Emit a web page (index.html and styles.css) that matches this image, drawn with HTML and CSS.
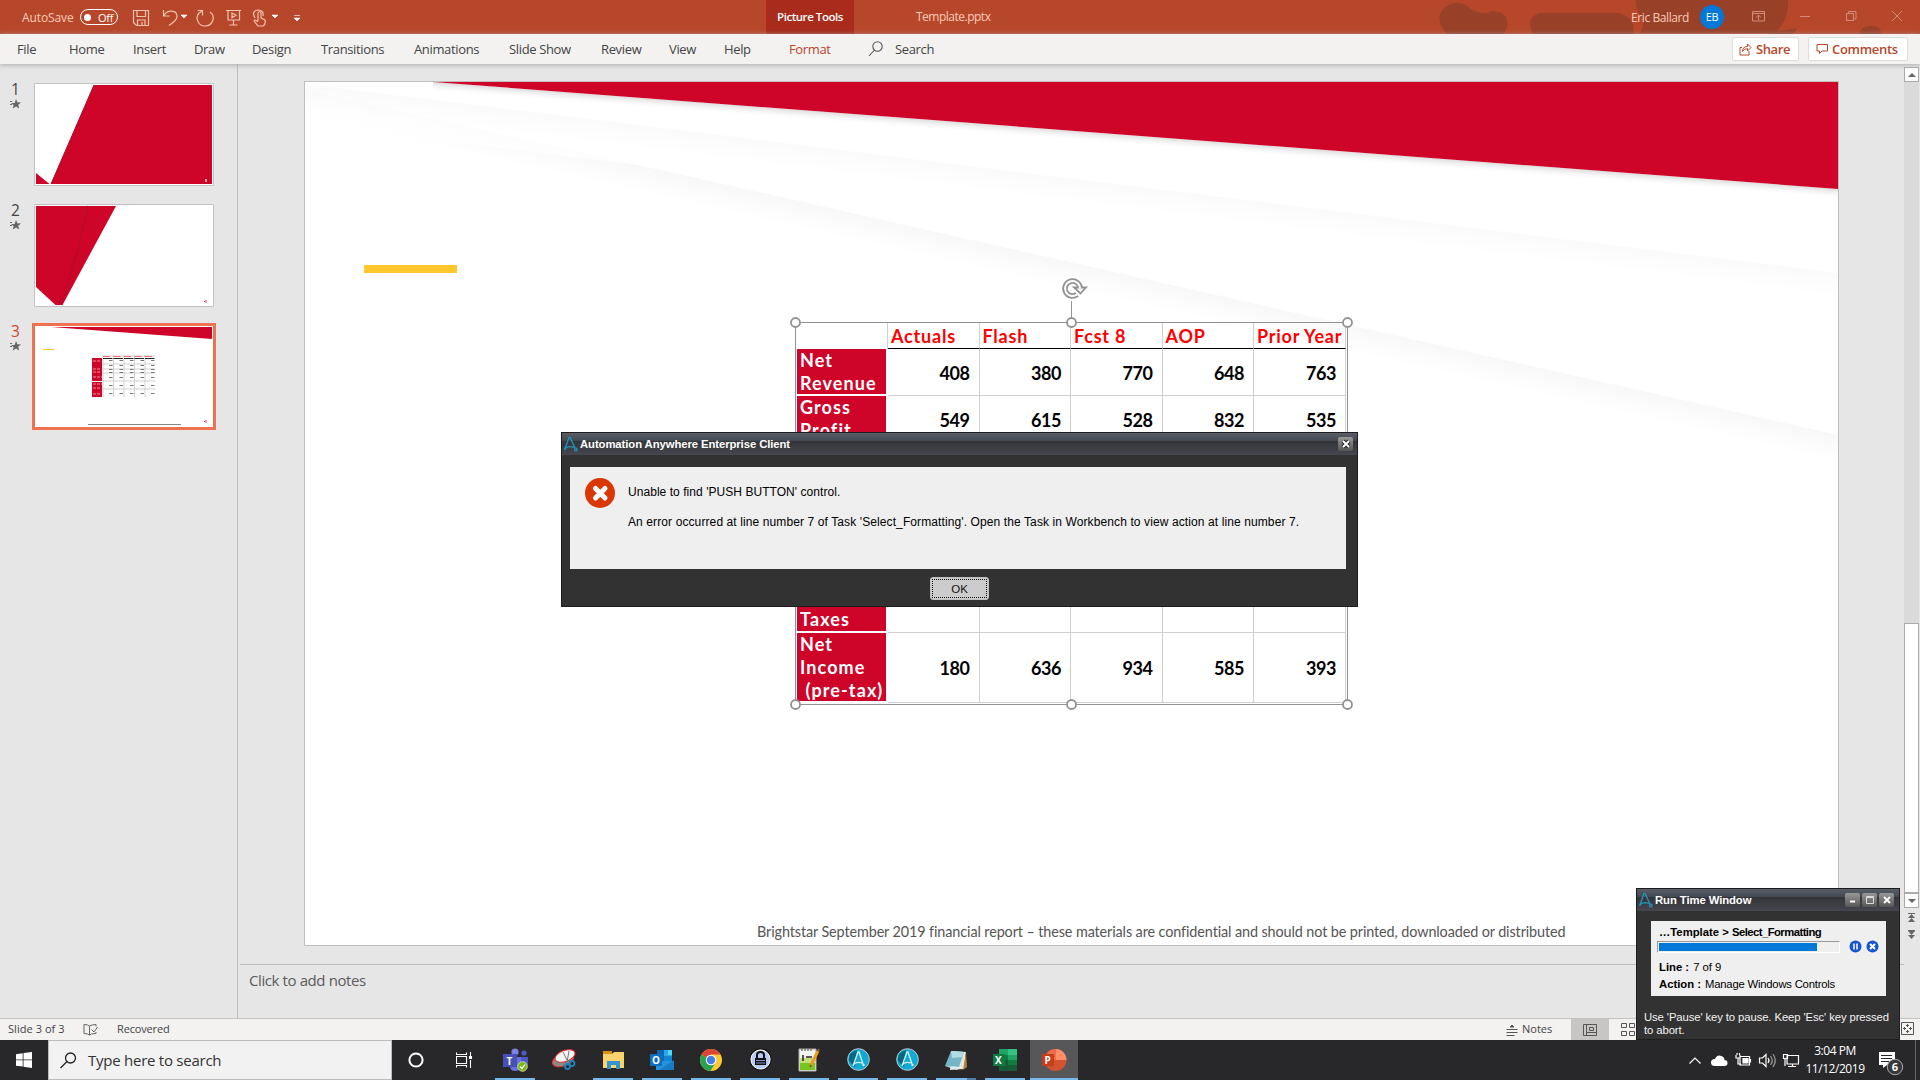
FILE: index.html
```html
<!DOCTYPE html>
<html lang="en">
<head>
<meta charset="utf-8">
<title>Template.pptx</title>
<link rel="stylesheet" href="styles.css">
</head>
<body>
<div class="screen">
  <header class="titlebar">
    <svg class="title-art" width="520" height="34" viewBox="0 0 520 34"><g fill="#994028"><path d="M47 34Q34 20 43 9Q57-4 72 10Q82 16 92 11Q110 12 107 27L104 34z"/><path d="M133 34Q125 19 139 13H219Q237 19 233 34z"/><path d="M236 0H388Q389 22 374 33H240Q247 22 239 13Q235 7 236 0z"/><path d="M370 31Q385 31 397 28Q395 34 390 34H368z"/><path d="M459 34Q461 26 471 26T481 34z"/></g></svg>
    <div class="quick">
      <span class="autosave">AutoSave</span>
      <span class="toggle"><i></i>Off</span>
      <svg class="qicons" width="190" height="34" viewBox="120 0 190 34" fill="none" stroke="#f6c3b0" stroke-width="1.2"><path d="M133.500 10.500h15v15h-12l-3-3zM137 10.500v6h8.500v-6M137.500 25v-5h7.500v5M142 22v3"/><path d="M163.500 10v6h6M164 15.500c3-6 13-6 13 1 0 4-4 6-8 9"/><path d="M197.500 10.500h5v5M202 11c-9 5-4 15 3 15 8 0 11-10 5-14"/><path d="M226 10.500h15M228 10.500v9.500h11.500v-9.500M233.500 20v5M229.500 25h8M232 13l4 2.300-4 2.300z"/><path d="M258 21v-8q2-3 3 0v5l4 2q1 4-2 6h-5l-4-5q1-2 4 1M255 18q-4-7 3-8 6 0 5 6"/><path d="M181 15h6l-3 3zM272 15h6l-3 3zM294 18h6l-3 3zM294 15.500h6" fill="#fff" stroke="#fff" stroke-width=".6"/></svg>
    </div>
    <span class="picture-tools">Picture Tools</span>
    <span class="filename">Template.pptx</span>
    <div class="account"><span class="user">Eric Ballard</span><span class="avatar">EB</span>
      <svg class="wctl" width="160" height="34" viewBox="1745 0 160 34" fill="none" stroke="#d28b76"><path d="M1752.500 11.500h12v9.500h-12zM1752.500 13.500h12M1758.500 20v-4.500M1756 17.500l2.500-2.500 2.500 2.500M1800 16.500h10M1846.500 13.500h7v7h-7zM1848.500 13v-1.500h7.500v7.500h-2M1892 11l10 10M1902 11l-10 10"/></svg>
    </div>
  </header>
  <nav class="ribbon">
    <div class="tabs"><span>File</span><span>Home</span><span>Insert</span><span>Draw</span><span>Design</span><span>Transitions</span><span>Animations</span><span>Slide Show</span><span>Review</span><span>View</span><span>Help</span><span class="active">Format</span><svg width="16" height="18" viewBox="0 0 16 18" fill="none" stroke="#555" stroke-width="1.100"><circle cx="9.500" cy="6.500" r="4.700"/><path d="M6.500 10L1 16"/></svg><span class="search">Search</span></div>
    <div class="actions">
      <span class="btn share"><svg width="13" height="13" viewBox="0 0 13 13" fill="none" stroke="#b7472a"><path d="M3 4.500H1v7.500h9V8M3.500 8.500q0-5 5-5V1l3.500 3.500L8.500 8V5.700Q5 5.500 3.500 8.500z"/></svg>Share</span>
      <span class="btn comments"><svg width="12" height="12" viewBox="0 0 12 12" fill="none" stroke="#b7472a"><path d="M1 1.500h10.500v6.500H6L3.500 10.500V8H1z"/></svg>Comments</span>
    </div>
  </nav>
  <main class="work">
    <aside class="thumbs">
      <div class="thumb"><div class="num">1<svg width="11" height="10" viewBox="0 0 11 10"><path fill="#666" d="M6 0l1.300 3.300L11 3.500 8.200 5.800 9.200 9.500 6 7.500 2.800 9.500 3.600 6 1 4h3.700zM0 2h2v1H0zM0 5h2v1H0z"/></svg></div>
        <svg class="mini" width="180" height="103" viewBox="0 0 180 103"><path fill="#fff" stroke="#c3c3c3" d="M.5.500h179v102H.500z"/><path fill="#ce0529" d="M60 2h118v99H17zM2 90l13.500 11H2z"/><path fill="none" stroke="#a70a27" d="M60 2L17 101"/><path fill="#f0a0ae" d="M171 96h2v3h-2z"/></svg></div>
      <div class="thumb"><div class="num">2<svg width="11" height="10" viewBox="0 0 11 10"><path fill="#666" d="M6 0l1.300 3.300L11 3.500 8.200 5.800 9.200 9.500 6 7.500 2.800 9.500 3.600 6 1 4h3.700zM0 2h2v1H0zM0 5h2v1H0z"/></svg></div>
        <svg class="mini" width="180" height="103" viewBox="0 0 180 103"><path fill="#fff" stroke="#c3c3c3" d="M.5.500h179v102H.500z"/><path fill="#ce0529" d="M2 2h80L28.500 101h-7L2 83z"/><path fill="none" stroke="#b90a29" stroke-width="2" d="M54 2L43 49 27 101"/><path fill="#777" d="M170 97h1v1h-1z"/><path fill="#f9a0ab" d="M171 96h2v3h-2z"/></svg></div>
      <div class="thumb selected"><div class="num">3<svg width="11" height="10" viewBox="0 0 11 10"><path fill="#666" d="M6 0l1.300 3.300L11 3.500 8.200 5.800 9.200 9.500 6 7.500 2.800 9.500 3.600 6 1 4h3.700zM0 2h2v1H0zM0 5h2v1H0z"/></svg></div>
        <svg class="mini" width="184" height="107" viewBox="0 0 184 107"><path fill="#fff" stroke="#ee7150" stroke-width="3" d="M1.500 1.500h181v104h-181z"/><path fill="#ce0529" d="M19 4h161v12z"/><path fill="#ffc72c" d="M11 26h11v1H11z"/><path d="M70.500 33h53M70.500 41h53M70.500 46h53M70.500 50h53M70.500 58h53M70.500 66h53M71 33v41M81.500 32v42M92 32v42M102.500 32v42M113 32v42" fill="none" stroke="#d0d0d0"/><path fill="#ce0529" d="M60 35h10v39H60z"/><path stroke="#e8909e" fill="none" stroke-dasharray="3 1" d="M61 38h8M61 46h8M61 49h7M61 54h9M61 61h9M61 65h8M61 71h8"/><path stroke="#fff" d="M60 58.500h10"/><path stroke="#222" stroke-dasharray="9.500 1" d="M71 35.500h52"/><path stroke="#f37070" stroke-dasharray="7 3.500" d="M71 33.500h52"/><path stroke="#777" stroke-dasharray="3.500 7" d="M77 37.500h47M77 42.500h47M77 46.500h47M77 49.500h47M77 54.500h47M77 62.500h47M77 70.500h47"/><path stroke="#888" d="M56 101.500h93"/><path fill="#777" d="M172 98h1v1h-1z"/><path fill="#f9a0ab" d="M173 97h2v3h-2z"/></svg></div>
    </aside>
    <section class="editor">
      <div class="canvas">
        <div class="slide">
          <svg class="art" width="1533" height="863" viewBox="0 0 1533 863"><defs><linearGradient id="a" gradientUnits="userSpaceOnUse" x1="800" y1="188" x2="794.150" y2="214"><stop stop-color="#f8f8f8"/><stop offset="1" stop-color="#fff"/></linearGradient><linearGradient id="b" gradientUnits="userSpaceOnUse" x1="800" y1="100.600" x2="797.040" y2="124.600"><stop stop-color="#f8f8f8"/><stop offset="1" stop-color="#fff"/></linearGradient><linearGradient id="c" gradientUnits="userSpaceOnUse" x1="800" y1="51.200" x2="799.239" y2="61.200"><stop stop-color="#dcdcdc"/><stop offset="1" stop-color="#fff" stop-opacity="0"/></linearGradient></defs>
          <path fill="url(#a)" d="M0 8L1533 353v40L0 48z"/><path fill="url(#b)" d="M0 2L1533 191v40L0 42z" opacity=".7"/><path fill="url(#c)" d="M128 0L1533 107v16L128 12z"/><path fill="#ce0529" d="M128 0h1405v107z"/></svg>
          <div class="accent"></div>
          <div class="sheet">
            <span class="c blank"></span><span class="c h">Actuals</span><span class="c h">Flash</span><span class="c h">Fcst 8</span><span class="c h">AOP</span><span class="c h year">Prior Year</span>
            <span class="l">Net<br>Revenue</span><span class="c">408</span><span class="c">380</span><span class="c">770</span><span class="c">648</span><span class="c">763</span>
            <span class="l">Gross<br>Profit</span><span class="c">549</span><span class="c">615</span><span class="c">528</span><span class="c">832</span><span class="c">535</span>
            <span class="l end">Taxes</span><span class="c"></span><span class="c"></span><span class="c"></span><span class="c"></span><span class="c"></span>
            <span class="l">Net<br>Income<br>&nbsp;(pre-tax)</span><span class="c">180</span><span class="c">636</span><span class="c">934</span><span class="c">585</span><span class="c">393</span>
          </div>
          <svg class="handles" width="572" height="440" viewBox="785 275 572 440" fill="none" stroke="#929292"><path d="M795.500 322.500h552v382h-552zM1071.500 301v22"/><g fill="#fff" stroke-width="1.800"><circle cx="795.500" cy="322.500" r="4.500"/><circle cx="1071.500" cy="322.500" r="4.500"/><circle cx="1347.500" cy="322.500" r="4.500"/><circle cx="795.500" cy="704.500" r="4.500"/><circle cx="1071.500" cy="704.500" r="4.500"/><circle cx="1347.500" cy="704.500" r="4.500"/></g><path stroke-width="5.600" d="M1077 294.500a7.500 7.500 0 1 1 3-6"/><path fill="#fff" stroke-width="1.800" d="M1074 287.500h12l-5.500 6z"/><path stroke="#fff" stroke-width="2" d="M1077 294.500a7.500 7.500 0 1 1 3-6"/></svg>
          <p class="footer">Brightstar September 2019 financial report – these materials are confidential and should not be printed, downloaded or distributed</p>
        </div>
      </div>
      <div class="notes">Click to add notes</div>
      <div class="scroll"><span class="sbox"><i class="up"></i></span><span class="thumbbar"></span><span class="sbox"><i class="down"></i></span><svg width="15" height="32" viewBox="0 0 15 32" fill="#666"><path d="M7.500 4l3.500 4H4zM7.500 8l3.500 4H4zM4 21h7l-3.500 4zM4 25h7l-3.500 4zM4 3h7v1H4zM4 20h7v1H4z"/></svg></div>
    </section>
  </main>
  <div class="status">
    <span class="pos">Slide 3 of 3</span><svg width="16" height="14" viewBox="0 0 16 14" fill="none" stroke="#666"><path d="M6.500 12Q5 10.500 1 10.500V1.500q4 0 5.500 1.500zM6.500 3Q9 1.500 13 1.500v2M6.500 12q1-1.500 6.500-1.500V9M8.500 6.500l2.500 2.500 3.500-5"/></svg><span class="rec">Recovered</span>
    <span class="right"><svg width="12" height="12" viewBox="0 0 12 12" stroke="#555" fill="#555"><path d="M.5 5.500h11M.5 8.500h11M.5 11.500h8M6 1l2 2H4z"/></svg><b>Notes</b><span class="view on"><svg width="14" height="12" viewBox="0 0 14 12" fill="none" stroke="#555"><path d="M.5.500h13v11H.500zM3.500.500v11M6.500 3.500h4v3h-4zM4 8.500h9"/></svg></span><svg class="grid-ic" width="15" height="13" viewBox="0 0 15 13" fill="none" stroke="#555"><path d="M.5.500h5v4h-5zM8.500.500h5v4h-5zM.5 8.500h5v4h-5zM8.500 8.500h5v4h-5z"/></svg><svg class="fit" width="13" height="13" viewBox="0 0 13 13" fill="none" stroke="#555"><path d="M.5.500h12v12H.500zM6.500 2v3M6.500 8v3M2 6.500h3M8 6.500h3M5 3.500h3M5 9.500h3M3.500 5v3M9.500 5v3"/></svg></span>
  </div>
  <footer class="taskbar">
    <span class="start"><svg width="16" height="16" viewBox="0 0 16 16" fill="#fff"><path d="M0 2.200L6.700 1.200v6.300H0zM7.500 1.100L16 0v7.500H7.500zM0 8.300h6.700v6.300L0 13.700zM7.500 8.300H16V16l-8.500-1.200z"/></svg></span>
    <div class="find"><svg width="17" height="17" viewBox="0 0 17 17" fill="none" stroke="#222" stroke-width="1.300"><circle cx="10.500" cy="6" r="5"/><path d="M7 9.500L.5 16"/></svg>Type here to search</div>
    <span class="sys"><svg width="18" height="18"><circle cx="9" cy="9" r="6.600" fill="none" stroke="#fff" stroke-width="2"/></svg></span>
    <span class="sys"><svg width="17" height="16" viewBox="0 0 17 16" fill="none" stroke="#fff" stroke-width="1.100"><path d="M.5.500v2h10v-2M.5 4.500h10v7H.500zM.5 15.500v-2h10v2M14.500 0v4M14.500 8v8"/><path fill="#fff" d="M13.500 4.500h2v2h-2z"/></svg></span>
    <div class="apps">
      <span class="app run"><svg width="25" height="24" viewBox="0 0 25 24"><circle cx="12" cy="4" r="3.600" fill="#7b83eb"/><circle cx="21" cy="5" r="2.600" fill="#5059c9"/><path fill="#5059c9" d="M17 9h8v7q-1 4-6 4z"/><path fill="#6770dc" d="M7 9h11v9q-1 5-6 5t-5-5z"/><path fill="#4650b8" d="M0 6h14v13H0z"/><text x="3.500" y="16.500" class="il">T</text><circle cx="19.500" cy="18.500" r="4.800" fill="#79b51c" stroke="#d9e9b8" stroke-width=".8"/><path d="M17 18.500l2 2 3-4" fill="none" stroke="#fff" stroke-width="1.200"/></svg></span>
      <span class="app"><svg width="26" height="24" viewBox="0 0 26 24"><ellipse cx="12" cy="12" rx="11" ry="6" transform="rotate(-20 12 12)" fill="#8c8989" stroke="#e0363e"/><ellipse cx="14" cy="8" rx="10.500" ry="5.500" transform="rotate(-20 14 8)" fill="#f5f5f5" stroke="#dd3035"/><path d="M12 4l5 10M18 3l-2 11M16 14l-4 3" stroke="#777"/><g fill="none" stroke="#2082bf" stroke-width="1.800"><circle cx="16.500" cy="18.500" r="2.500"/><circle cx="21" cy="15.500" r="2.500"/></g></svg></span>
      <span class="app run"><svg width="23" height="20" viewBox="0 0 23 20"><path fill="#d79512" d="M1 1h9v5H1z"/><path fill="#f9d36c" d="M1 4h9l2-2h10v16H1z"/><path fill="#3394cf" d="M5 18V11h13v8h-4v-4H9v4H5z"/></svg></span>
      <span class="app run"><svg width="25" height="22" viewBox="0 0 25 22"><path fill="#1066b5" d="M7 1h15v12H7z"/><path fill="#28a8ea" d="M14 1h8v6h-8z"/><path fill="#0b86d3" d="M14 7h8v6h-8z"/><path fill="#50d9ff" d="M18 1h4v5h-4z"/><path fill="#2494dc" d="M6 12h18v9H6z"/><path fill="#1470b8" d="M24 11L9 21h15z" opacity=".7"/><path fill="#0d70bf" d="M0 5h12v12H0z"/><text x="2" y="15" class="il">O</text></svg></span>
      <span class="app run"><svg width="22" height="22" viewBox="0 0 22 22"><circle cx="11" cy="11" r="11" fill="#fbc931"/><path fill="#dc4437" d="M11 11L1.500 5.500A11 11 0 0 1 20.500 5.500H11z"/><path fill="#2ba24c" d="M1.500 5.500A11 11 0 0 0 10.500 22L15.500 13.500 11 11z"/><circle cx="11" cy="11" r="5.300" fill="#fff"/><circle cx="11" cy="11" r="4.200" fill="#477ee8"/></svg></span>
      <span class="app run"><svg width="23" height="23" viewBox="0 0 23 23"><circle cx="11.500" cy="11.500" r="11" fill="#111"/><circle cx="11.500" cy="11.500" r="9.600" fill="#b8caf7" stroke="#fff"/><path fill="none" stroke="#111" stroke-width="2" d="M8 11V7q0-3 3.500-3T15 7v4"/><path fill="#111" d="M6 10h11v7H6z"/><path stroke="#8193ca" d="M7 12.500h9M7 15h9"/></svg></span>
      <span class="app run"><svg width="23" height="24" viewBox="0 0 23 24"><path fill="#f2f4ed" stroke="#aaa" d="M1 1h17v22H1z"/><path fill="#75c71c" d="M2 14h15v8H2z"/><path fill="#c5df76" d="M2 10h15v5H2z"/><path stroke="#444" stroke-width="1" d="M4 1v2M7 1v2M10 1v2M13 1v2"/><path stroke="#222" stroke-width="1.500" d="M5 7v6M8 9h6"/><path stroke="#ed9b1e" stroke-width="3" d="M20 3l-7 14"/><path stroke="#7e5c38" stroke-width="2" d="M20 3l1-2M13 17l-1 2"/></svg></span>
      <span class="app run"><svg width="23" height="23" viewBox="0 0 23 23"><circle cx="11.500" cy="11.500" r="10.800" fill="#12a9d7" stroke="#bdc7cb"/><path fill="#006985" d="M10 2Q1 4 2 13l6 6z"/><path fill="none" stroke="#d7f2fa" stroke-width="1.300" d="M6 18l5-14h1l4 12M6 18q2-5 9-3"/><circle cx="16.500" cy="17" r="1.200" fill="#d7f2fa"/></svg></span>
      <span class="app run"><svg width="23" height="23" viewBox="0 0 23 23"><circle cx="11.500" cy="11.500" r="10.800" fill="#12a9d7" stroke="#bdc7cb"/><path fill="#006985" d="M10 2Q1 4 2 13l6 6z"/><path fill="none" stroke="#d7f2fa" stroke-width="1.300" d="M6 18l5-14h1l4 12M6 18q2-5 9-3"/><circle cx="16.500" cy="17" r="1.200" fill="#d7f2fa"/></svg></span>
      <span class="app run multi"><svg width="24" height="22" viewBox="0 0 24 22"><path fill="#e8e7dd" d="M8 2l14 1-2 17-14 1z"/><path fill="#b1833e" d="M22 3l1 15-4 3z"/><path fill="#73b7c6" d="M7 2l13 1-5 15-14-1z"/><path fill="#b4dde3" d="M7 2l13 1-2 5-10 1z"/><path fill="#d4f0f2" d="M1 17l14 1-2 3z"/></svg></span>
      <span class="app run"><svg width="24" height="22" viewBox="0 0 24 22"><path fill="#21a366" d="M6 0h18v11H6z"/><path fill="#33c481" d="M15 0h9v6h-9z"/><path fill="#107c41" d="M6 6h9v5H6zM15 11h9v5h-9z"/><path fill="#185c37" d="M6 11h9v5h9v6H6z"/><path fill="#107c41" d="M0 5h12v12H0z"/><text x="2" y="15" class="il">X</text></svg></span>
      <span class="app run current"><svg width="25" height="22" viewBox="0 0 25 22"><circle cx="13.500" cy="11" r="11" fill="#d35230"/><path fill="#ff8f6b" d="M13.500 0a11 11 0 0 1 11 11h-11z"/><path fill="#ed6c47" d="M13.500 0v11h-11a11 11 0 0 1 11-11z"/><path fill="#c43e1c" d="M0 5h12v12H0z"/><text x="2.500" y="15" class="il">P</text></svg></span>
    </div>
    <div class="tray">
      <svg width="118" height="40" viewBox="1685 1040 118 40" fill="none" stroke="#fff" stroke-width="1.200"><path d="M1689.500 1063.500l5.500-5.500 5.500 5.500"/><path fill="#fff" stroke="none" d="M1715 1066q-4 0-4-3.500t4-3.500q2-5 6.500-3 3 1 3 4 3 0 3 3t-3 3z"/><path d="M1740 1056.500h9.500v8.500h-9.500zM1750.500 1059v3.500M1736 1055v3h4v-3M1738 1058v6h3M1737 1053v2M1739.500 1053v2"/><path fill="#fff" d="M1743 1058.500h5v4.500h-5z"/><path d="M1759.500 1058h3l3.500-3.500v12l-3.500-3.500h-3zM1768 1058q2 2.500 0 5"/><path stroke="#999" d="M1770.500 1056q3.500 4.500 0 9M1773 1054q4.500 6.500 0 13"/><path d="M1787 1055.500h11.500v8.500h-11.500zM1792.500 1064v2.500M1788 1066.500h8M1783.500 1054.500h4v4h-4zM1785 1059v7"/></svg>
      <div class="clock"><span class="time">3:04 PM</span><span>11/12/2019</span></div>
      <div class="notif"><svg width="26" height="28" viewBox="0 0 26 28"><path fill="#fff" d="M1 1h16v13h-8l-4 3v-3H1z"/><path stroke="#27272a" d="M3 4.500h11M3 7.500h11M3 10.500h8"/><circle cx="17" cy="16" r="7.700" fill="#38383a" stroke="#aaa"/><text x="13.800" y="20" class="badge">6</text></svg></div>
    </div>
  </footer>

  <section class="dialog win">
    <div class="wtitle"><svg width="14" height="16" viewBox="0 0 14 16" fill="none" stroke="#2494bb" stroke-width="1.300"><path d="M.5 14L5 1.500h1l5 10.500M.5 14Q3 9 10 11.500"/><circle cx="11.800" cy="13.500" r="1.300"/></svg><b>Automation Anywhere Enterprise Client</b><span class="wb"><svg width="14" height="14" viewBox="0 0 14 14"><path stroke="#222" stroke-width="4" d="M4 4l6 6M10 4l-6 6"/><path stroke="#fff" stroke-width="2" d="M4 4l6 6M10 4l-6 6"/></svg></span></div>
    <div class="dbody"><svg width="30" height="30" viewBox="0 0 30 30"><circle cx="15" cy="15" r="15" fill="#da3704"/><path stroke="#fff" stroke-width="5" stroke-linecap="round" d="M10.500 10.500l9.500 9.500M20 10.500L10.500 20"/></svg><div class="msg"><p>Unable to find 'PUSH BUTTON' control.</p><p class="err">An error occurred at line number 7 of Task 'Select_Formatting'. Open the Task in Workbench to view action at line number 7.</p></div></div>
    <button class="ok">OK</button>
  </section>

  <section class="runtime win">
    <div class="wtitle"><svg width="14" height="16" viewBox="0 0 14 16" fill="none" stroke="#2494bb" stroke-width="1.300"><path d="M.5 14L5 1.500h1l5 10.500M.5 14Q3 9 10 11.500"/><circle cx="11.800" cy="13.500" r="1.300"/></svg><b>Run Time Window</b><span class="wb"><svg width="14" height="14"><path stroke="#fff" stroke-width="2" d="M4 8.500h5"/></svg></span><span class="wb"><svg width="14" height="14"><path fill="none" stroke="#ddd" d="M3.500 3.500h7v7h-7zM3.500 4.500h7"/></svg></span><span class="wb"><svg width="14" height="14"><path stroke="#fff" stroke-width="1.800" d="M4 4l6 6M10 4l-6 6"/></svg></span></div>
    <div class="rbody">
      <b class="task"><span>…Template &gt;</span> <span class="tight">Select_Formatting</span></b>
      <div class="prow"><span class="bar"><i></i></span><svg width="13" height="13" viewBox="0 0 13 13"><circle cx="6.500" cy="6.500" r="6" fill="#1556cf"/><path stroke="#fff" stroke-width="1.500" d="M5 3.500v6M8 3.500v6"/></svg><svg width="13" height="13" viewBox="0 0 13 13"><circle cx="6.500" cy="6.500" r="6" fill="#1556cf"/><path stroke="#fff" stroke-width="2" d="M4 4l5 5M9 4l-5 5"/></svg></div>
      <p class="line"><b>Line :</b><span>7 of 9</span></p>
      <p class="action"><b>Action :</b><span>Manage Windows Controls</span></p>
    </div>
    <p class="hint">Use 'Pause' key to pause. Keep 'Esc' key pressed<br>to abort.</p>
  </section>
</div>
</body>
</html>
```

FILE: styles.css
```css
* { box-sizing: border-box; }
body { margin: 0; overflow: hidden; font-family: "Segoe UI", "Open Sans", "Noto Sans", sans-serif; color: #444; }
p { margin: 0; }
svg { display: block; flex: none; }
.screen { position: relative; width: 1920px; height: 1080px; display: flex; flex-direction: column; background: #e6e6e6; overflow: hidden; white-space: nowrap; }

.titlebar { position: relative; height: 34px; flex: none; background: #b7472a; color: #f9cbb9; display: flex; font-size: 12px; line-height: 33px; }
.title-art { position: absolute; right: 0; top: 0; }
.quick { width: 766px; display: flex; align-items: center; padding-left: 22px; }
.autosave { width: 58px; letter-spacing: -.1px; }
.toggle { width: 38px; height: 16px; border: 1.5px solid #fff; border-radius: 9px; color: #fff; font-size: 11px; line-height: 13px; display: flex; align-items: center; gap: 7px; padding-left: 3px; letter-spacing: -.3px; }
.toggle i { width: 7px; height: 7px; border-radius: 50%; background: #fff; }
.qicons { margin-left: 2px; }
.picture-tools { width: 88px; background: #a82b1c; color: #fff; text-align: center; letter-spacing: -.45px; font-weight: 600; font-size: 11.5px; }
.filename { margin-left: 62px; letter-spacing: -.5px; }
.account { position: relative; margin-left: auto; display: flex; align-items: center; padding-right: 15px; }
.user { width: 69px; letter-spacing: -.4px; padding-top: 1px; }
.avatar { width: 24px; height: 24px; border-radius: 50%; background: #0078d7; color: #fff; font-size: 11px; line-height: 24px; text-align: center; letter-spacing: -.4px; }
.wctl { margin-left: 21px; }

.ribbon { position: relative; height: 30px; flex: none; background: #f3f2f1; display: flex; justify-content: space-between; box-shadow: 0 1px 5px #aaa; padding-left: 17px; z-index: 1; }
.tabs { display: grid; grid-template-columns: 52px 64px 61px 58px 69px 93px 95px 92px 68px 55px 65px 79px 27px 60px; line-height: 30px; font-size: 13px; letter-spacing: -.35px; align-items: center; }
.tabs .active { color: #b7472a; }
.actions { display: flex; gap: 9px; padding: 3px 12px 0 0; }
.btn { height: 24px; border: 1px solid #dfdcda; border-radius: 2px; background: #fff; color: #b7472a; font-size: 13px; font-weight: 600; letter-spacing: -.4px; display: flex; align-items: center; gap: 4px; padding-left: 6px; }
.share { width: 67px; }
.comments { width: 100px; padding-left: 7px; letter-spacing: -.3px; }

.work { height: 954px; flex: none; display: flex; }
.thumbs { width: 238px; border-right: 1px solid #bdbdbd; padding: 19px 0 0 10px; display: flex; flex-direction: column; gap: 18px; }
.thumb { display: flex; height: 103px; }
.num { width: 24px; font-size: 15.5px; line-height: 12px; padding-left: 1px; text-align: left; }
.num svg { margin: 4px 0 0 -1px; }
.selected .num { color: #d24726; }
.selected .mini { margin: -2px 0 0 -2px; }
.editor { flex: 1; display: grid; grid-template: 900px 54px / 1666px 16px; position: relative; }
.canvas { padding: 17px 0 0 66px; }
.slide { position: relative; width: 1535px; height: 865px; border: 1px solid #bfbfbf; background: #fff; overflow: hidden; }
.art { position: absolute; left: 0; top: 0; }
.accent { position: absolute; left: 59px; top: 183px; width: 93px; height: 8px; background: #ffc72c; }
.sheet { position: absolute; left: 491px; top: 241px; width: 551px; display: grid; grid-template: 26px 47px 47px 190px 70px / 92px 91.5px 91.500px 91.500px 91.500px 92px; font: bold 18px/23px "Century Gothic", Lato, sans-serif; color: #000; }
.c { border-right: 1px solid #d0d0d0; border-bottom: 1px solid #d0d0d0; display: flex; align-items: center; justify-content: flex-end; padding: 2px 9px 0 0; letter-spacing: -.4px; }
.c.blank { border-bottom: 0; }
.h { color: #f00; justify-content: flex-start; padding: 1px 0 0 3px; border-bottom: 1.5px solid #000; letter-spacing: .8px; }
.h.year { letter-spacing: .75px; }
.l { background: #ce0529; color: #fff; padding-left: 3px; margin: 0 2px 2px 1px; letter-spacing: 1.1px; overflow: hidden; }
.l.end { display: flex; align-items: flex-end; }
.handles { position: absolute; left: 480px; top: 193px; }
.footer { position: absolute; left: 452px; top: 840px; font: 14.4px/20px "Century Gothic", Lato, sans-serif; letter-spacing: -.105px; color: #555; }
.notes { border-top: 1px solid #bdbdbd; margin-left: 2px; padding: 3px 0 0 9px; font-size: 15px; line-height: 24px; letter-spacing: -.4px; color: #5c5c5c; }
.scroll { grid-column: 2; grid-row: 1; display: flex; flex-direction: column; padding-top: 3px; width: 15px; background: linear-gradient(#e6e6e6 3px, #dadada 3px, #dadada 844px, #e6e6e6 844px); }
.sbox { width: 15px; height: 15px; border: 1px solid #ababab; background: #fff; display: grid; place-items: center; flex: none; }
.up { border: 4px solid transparent; border-bottom-color: #666; border-top: 0; }
.down { border: 4px solid transparent; border-top-color: #666; border-bottom: 0; }
.thumbbar { height: 270px; margin-top: 541px; border: 1px solid #ababab; background: #fff; }
.scroll svg { margin-top: 2px; }

.status { height: 22px; flex: none; background: #f3f2f1; border-top: 1px solid #c3c3c3; display: flex; align-items: center; font-size: 11px; }
.pos { width: 75px; padding: 0 0 3px 8px; box-sizing: content-box; letter-spacing: .05px; }
.rec { margin-left: 18px; letter-spacing: -.15px; font-weight: 500; padding-bottom: 2px; }
.right { margin-left: auto; display: flex; align-items: center; width: 414px; height: 21px; }
.right b { font-weight: 500; margin-left: 4px; width: 49px; padding-bottom: 2px; }
.view { width: 38px; height: 21px; background: #c8c6c4; display: grid; place-items: center; }
.grid-ic { margin-left: 12px; }
.fit { margin: -3px 0 0 265px; }

.taskbar { height: 40px; flex: none; background: #28282a; display: flex; color: #fff; position: relative; }
.start { width: 48px; display: grid; place-items: center; }
.find { width: 344px; background: #f2f2f2; border: 1px solid #bbb; color: #333; font-size: 15px; letter-spacing: -.25px; display: flex; align-items: center; gap: 11px; padding-left: 11px; }
.sys { width: 48px; display: grid; place-items: center; }
.apps { display: flex; gap: 1px; margin-left: 3px; }
.app { width: 48px; height: 40px; display: grid; place-items: center; }
.run { background: linear-gradient(#76b9ed, #76b9ed) center bottom / 40px 2px no-repeat; }
.multi { background: linear-gradient(90deg, #76b9ed 31px, #4f7ea6 31px) center bottom / 40px 2px no-repeat; }
.current { background: linear-gradient(#76b9ed, #76b9ed) center bottom / 48px 2px no-repeat #575759; }
.app svg { margin-bottom: 1px; }
.il { font: bold 10px "Open Sans", sans-serif; fill: #fff; }
.tray { margin-left: auto; display: flex; width: 235px; }
.clock { display: flex; flex-direction: column; width: 64px; text-align: center; font-size: 12px; line-height: 18px; padding-top: 2px; letter-spacing: -.45px; }
.notif { padding: 11px 0 0 11px; width: 49px; border-right: 1px solid #666; }
.badge { font: bold 11px "Open Sans", sans-serif; fill: #fff; }

.win { position: absolute; background: #323232; border: 1px solid #1d1d1f; font-family: "Liberation Sans", Arial, sans-serif; color: #000; }
.wtitle { height: 22px; background: linear-gradient(#5a5e66, #444850 35%, #343538 38%, #45464f); display: flex; align-items: center; gap: 2px; color: #fff; padding-left: 2px; font-size: 11.300px; letter-spacing: -.08px; }
.wtitle b { margin-right: auto; }
.wb { width: 15px; height: 14px; border-radius: 2px; background: linear-gradient(#999, #555); display: grid; place-items: center; }
.dialog { left: 561px; top: 432px; width: 797px; height: 175px; }
.dialog .wtitle { padding-right: 4px; }
.dbody { margin: 12px 11px 0 8px; height: 102px; background: #efefef; display: flex; padding: 11px 0 0 15px; gap: 13px; }
.msg { font-size: 12px; line-height: 30px; margin-top: -1px; letter-spacing: .05px; }
.err { letter-spacing: .105px; }
.ok { display: block; margin: 8px 0 0 368px; width: 59px; height: 23px; padding: 0; border: 1px solid #c0c0c0; border-radius: 3px; background: #ccc; outline: 1px dotted #111; outline-offset: -3px; font: 11.500px "Liberation Sans", sans-serif; color: #111; }
.runtime { left: 1636px; top: 888px; width: 264px; height: 152px; }
.runtime .wtitle { padding-right: 5px; }
.rbody { margin: 10px 13px 0 14px; height: 75px; background: #efefef; padding: 4px 0 0 6px; font-size: 11.300px; line-height: 14px; }
.task { display: block; padding-left: 2px; }
.tight { letter-spacing: -.55px; }
.prow { display: flex; gap: 4px; margin-top: 1px; align-items: center; }
.bar { width: 183px; height: 12px; border: 1px solid #fff; border-top-color: #999; border-left-color: #999; padding: 1px; margin-right: 5px; }
.bar i { display: block; width: 158px; height: 8px; background: #0078d7; }
.line { display: flex; gap: 4px; padding: 7px 0 0 2px; }
.action { display: flex; gap: 4px; padding: 3px 0 0 2px; }
.action span { letter-spacing: -.22px; }
.hint { color: #f2f2f2; font-size: 11.300px; line-height: 13px; padding: 15px 0 0 7px; letter-spacing: -.1px; }
```
